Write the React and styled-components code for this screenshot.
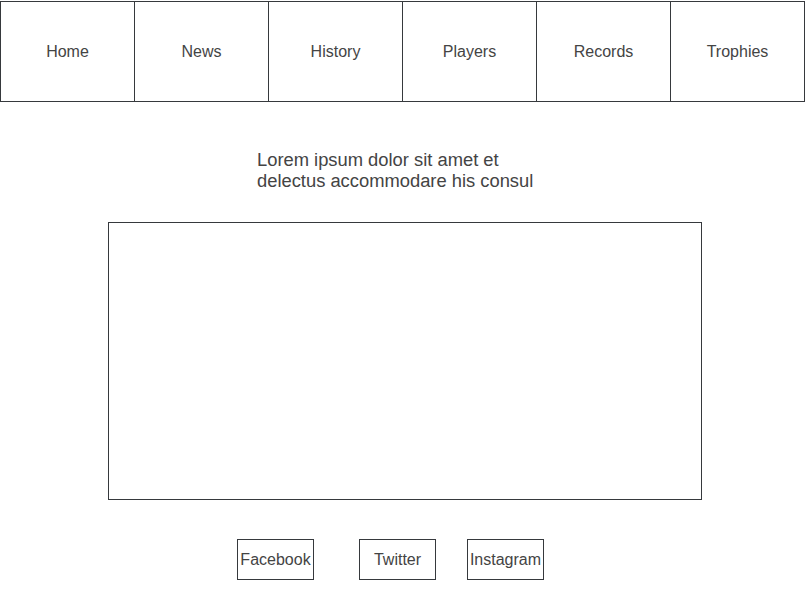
import React from "react";
import styled, { createGlobalStyle } from "styled-components";

const GlobalStyle = createGlobalStyle`
    body {
        margin: 0;
        background: #ffffff;
        font-family: "Liberation Sans", Arial, sans-serif;
        color: #444444;
    }
    * {
        box-sizing: border-box;
    }
`;

const Page = styled.div`
    width: 806px;
    height: 600px;
    padding-top: 1px;
`;

const NavBar = styled.nav`
    display: flex;
`;

const NavItem = styled.div`
    display: flex;
    align-items: center;
    justify-content: center;
    width: ${props => (props.last ? 135 : 134)}px;
    height: 101px;
    border: 1px solid #36393d;
    border-right: ${props => (props.last ? "1px solid #36393d" : "none")};
    font-size: 16px;
    color: #444444;
`;

const Intro = styled.p`
    margin: 47px 0 0 257px;
    width: 320px;
    font-size: 18.35px;
    line-height: 21px;
    color: #444444;
`;

const VideoFrame = styled.div`
    width: 594px;
    height: 278px;
    margin: 31px 0 0 108px;
    border: 1px solid #36393d;
`;

const SocialRow = styled.div`
    display: flex;
    margin: 39px 0 0 237px;
`;

const SocialButton = styled.div`
    display: flex;
    align-items: center;
    justify-content: center;
    width: 77px;
    height: 41px;
    margin-right: ${props => props.gap || 0}px;
    border: 1px solid #36393d;
    font-size: 16px;
    color: #444444;
`;

const links = ["Home", "News", "History", "Players", "Records", "Trophies"];

const App = () => {
    return (
        <Page>
            <GlobalStyle />
            <NavBar>
                {links.map((link, index) => (
                    <NavItem key={link} last={index === links.length - 1}>
                        {link}
                    </NavItem>
                ))}
            </NavBar>
            <Intro>
                Lorem ipsum dolor sit amet et
                <br />
                delectus accommodare his consul
            </Intro>
            <VideoFrame />
            <SocialRow>
                <SocialButton gap={45}>Facebook</SocialButton>
                <SocialButton gap={31}>Twitter</SocialButton>
                <SocialButton>Instagram</SocialButton>
            </SocialRow>
        </Page>
    );
};

export default App;
